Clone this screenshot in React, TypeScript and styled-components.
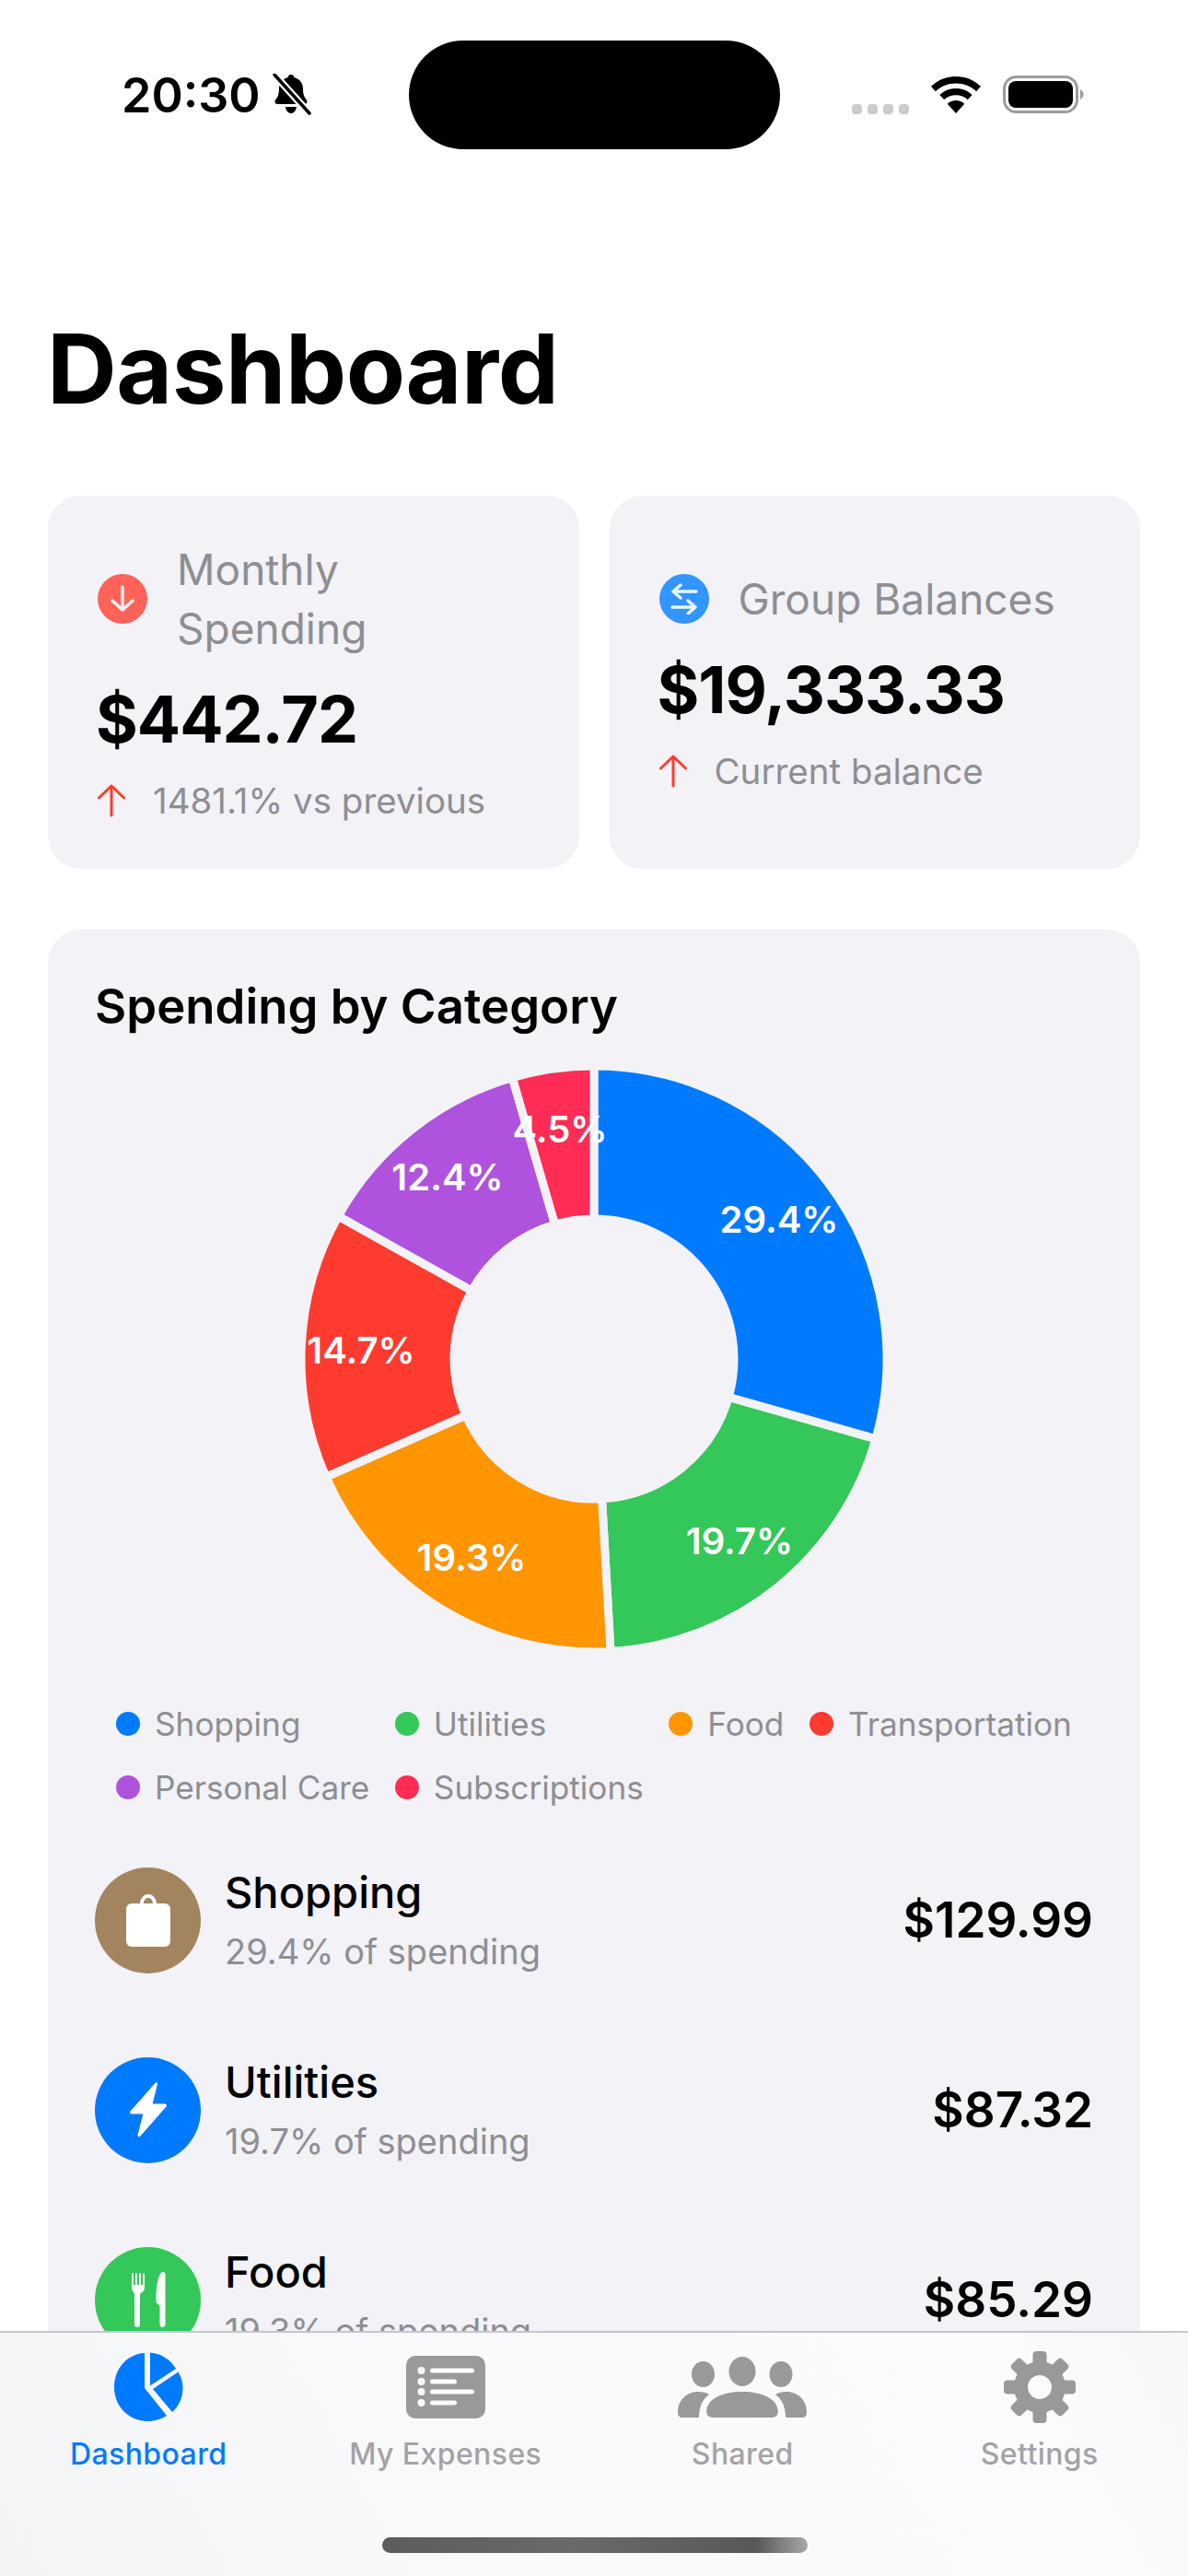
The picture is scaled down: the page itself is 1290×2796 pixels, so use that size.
import React from "react";
import styled, { createGlobalStyle } from "styled-components";

const FONT = `Inter, "Liberation Sans", sans-serif`;

const Global = createGlobalStyle`
  html, body { margin: 0; padding: 0; background: #fff; }
  body { font-family: ${FONT}; -webkit-font-smoothing: antialiased; }
`;

const Screen = styled.div`
  position: relative;
  width: 1290px;
  height: 2796px;
  overflow: hidden;
  background: #fff;
`;

const StatusBar = styled.header`
  display: grid;
  grid-template-columns: 1fr 403px 1fr;
  align-items: center;
  height: 118px;
  padding-top: 44px;
`;
const StatusLeft = styled.div`
  display: flex;
  align-items: center;
  justify-content: flex-start;
  padding-left: 132px;
  gap: 12px;
`;
const Time = styled.span`
  font-size: 52px;
  font-weight: 600;
  color: #000;
`;
const Island = styled.div`
  height: 118px;
  border-radius: 59px;
  background: #000;
`;
const StatusRight = styled.div`
  display: flex;
  align-items: center;
  padding-left: 78px;
  gap: 24px;
`;
const SignalDots = styled.div`
  display: flex;
  gap: 6px;
  margin-top: 30px;
`;
const SignalDot = styled.i`
  width: 11px;
  height: 11px;
  border-radius: 4px;
  background: #cbcbcb;
`;

const Content = styled.main`
  padding: 0 52px;
`;
const Title = styled.h1`
  margin: 0;
  padding-top: 178px;
  margin-left: -1px;
  font-size: 105px;
  line-height: 120px;
  font-weight: 700;
  letter-spacing: -0.5px;
  color: #000;
`;
const Cards = styled.section`
  display: grid;
  grid-template-columns: 1fr 1fr;
  gap: 33px;
  margin-top: 78px;
`;
const Card = styled.div`
  display: flex;
  flex-direction: column;
  justify-content: center;
  height: 405px;
  box-sizing: border-box;
  padding: 0 54px 4px;
  border-radius: 36px;
  background: #f2f2f7;
`;
const CardHead = styled.div`
  display: flex;
  align-items: center;
  gap: 32px;
`;
const CardIcon = styled.div<{ $bg: string }>`
  flex: none;
  display: flex;
  align-items: center;
  justify-content: center;
  width: 54px;
  height: 54px;
  border-radius: 50%;
  background: ${(p) => p.$bg};
`;
const CardTitle = styled.div`
  font-size: 46px;
  line-height: 64px;
  font-weight: 400;
  color: #8e8e93;
`;
const CardValue = styled.div`
  margin-top: 25px;
  margin-left: -2px;
  font-size: 70px;
  line-height: 84px;
  font-weight: 700;
  letter-spacing: -1px;
  color: #000;
`;
const CardSub = styled.div`
  display: flex;
  align-items: center;
  gap: 30px;
  margin-top: 23px;
  font-size: 38.5px;
  line-height: 46px;
  color: #8e8e93;
`;

const Panel = styled.section`
  margin-top: 66px;
  height: 1700px;
  box-sizing: border-box;
  padding: 50px 51px 0;
  border-radius: 36px;
  background: #f2f2f7;
`;
const PanelTitle = styled.h2`
  margin: 0;
  font-size: 52.7px;
  line-height: 66px;
  font-weight: 600;
  color: #000;
`;
const ChartWrap = styled.div`
  display: flex;
  justify-content: center;
  margin-top: 30px;
`;
const Legend = styled.div`
  display: grid;
  grid-template-columns: repeat(4, auto);
  justify-content: start;
  column-gap: 27.5px;
  row-gap: 23px;
  margin: 53px 0 0 23px;
`;
const LegendItem = styled.div`
  display: flex;
  align-items: center;
  gap: 16px;
  font-size: 35.2px;
  line-height: 46px;
  color: #8e8e93;
  white-space: nowrap;
`;
const LegendDot = styled.i<{ $c: string }>`
  width: 26px;
  height: 26px;
  border-radius: 50%;
  background: ${(p) => p.$c};
`;
const List = styled.div`
  display: flex;
  flex-direction: column;
  gap: 88px;
  margin-top: 62px;
`;
const Row = styled.div`
  display: flex;
  align-items: center;
  gap: 26px;
`;
const RowIcon = styled.div<{ $bg: string }>`
  flex: none;
  display: flex;
  align-items: center;
  justify-content: center;
  width: 115px;
  height: 115px;
  border-radius: 50%;
  background: ${(p) => p.$bg};
`;
const RowBody = styled.div`
  flex: 1;
`;
const RowName = styled.div`
  font-size: 47px;
  line-height: 58px;
  font-weight: 500;
  color: #000;
`;
const RowSub = styled.div`
  font-size: 38px;
  line-height: 50px;
  margin-top: 10px;
  color: #8e8e93;
`;
const RowAmount = styled.div`
  font-size: 53px;
  font-weight: 600;
  color: #000;
`;

const TabBar = styled.nav`
  position: absolute;
  left: 0;
  right: 0;
  bottom: 0;
  height: 266px;
  box-sizing: border-box;
  display: grid;
  grid-template-columns: repeat(4, 1fr);
  border-top: 2px solid #c6c6ca;
  background: linear-gradient(60deg, #f3f4f5 0%, #f9f9fb 35%, #fbfbfd 85%, #f6f7f7 100%);
`;
const Tab = styled.div<{ $active?: boolean }>`
  display: flex;
  flex-direction: column;
  align-items: center;
  padding-top: 20px;
  font-size: 32px;
  font-weight: 500;
  letter-spacing: 0.4px;
  color: ${(p) => (p.$active ? "#007aff" : "#a3a3a6")};
`;
const TabIconBox = styled.div`
  display: flex;
  align-items: center;
  justify-content: center;
  height: 78px;
`;
const TabLabel = styled.span`
  margin-top: 14px;
  line-height: 40px;
`;
const HomeIndicator = styled.div`
  position: absolute;
  left: 415px;
  bottom: 25px;
  width: 462px;
  height: 17px;
  border-radius: 9px;
  background: linear-gradient(90deg, #5c5c5c 0%, #6a6a6a 45%, #585858 88%, #a8a8a8 100%);
`;

const polar = (r: number, pct: number) => {
  const a = (pct / 100) * Math.PI * 2;
  return [r * Math.sin(a), -r * Math.cos(a)];
};
const SLICES = [
  { v: 29.4, c: "#007aff" },
  { v: 19.7, c: "#34c759" },
  { v: 19.3, c: "#ff9500" },
  { v: 14.7, c: "#ff3b30" },
  { v: 12.4, c: "#af52de" },
  { v: 4.5, c: "#ff2d55" },
];
const LABELS = [
  { t: "29.4%", x: 201, y: -152 },
  { t: "19.7%", x: 158, y: 197 },
  { t: "19.3%", x: -133, y: 215 },
  { t: "14.7%", x: -253, y: -10 },
  { t: "12.4%", x: -159, y: -198 },
  { t: "4.5%", x: -37, y: -250 },
];

const slicePath = (from: number, to: number, R: number, r: number) => {
  const [x0, y0] = polar(R, from);
  const [x1, y1] = polar(R, to);
  const [x2, y2] = polar(r, to);
  const [x3, y3] = polar(r, from);
  const large = to - from > 50 ? 1 : 0;
  return `M${x0} ${y0}A${R} ${R} 0 ${large} 1 ${x1} ${y1}L${x2} ${y2}A${r} ${r} 0 ${large} 0 ${x3} ${y3}Z`;
};

const PieLabel = styled.text`
  font-family: ${FONT};
  font-size: 40px;
  font-weight: 600;
  fill: #fff;
  text-anchor: middle;
  dominant-baseline: central;
`;

const Donut = () => {
  let acc = 0;
  return (
    <svg width="640" height="640" viewBox="-320 -320 640 640">
      {SLICES.map((s) => {
        const d = slicePath(acc, acc + s.v, 318, 152);
        acc += s.v;
        return <path key={s.c} d={d} fill={s.c} stroke="#f2f2f7" strokeWidth="9" />;
      })}
      {LABELS.map((l) => (
        <PieLabel key={l.t} x={l.x} y={l.y}>
          {l.t}
        </PieLabel>
      ))}
    </svg>
  );
};

const BellSlash = () => (
  <svg width="43" height="46" viewBox="0 0 43 46">
    <path d="M21 1c2 0 3.200 1.300 3.400 3 6 1.400 9.600 6.200 9.600 12.500 0 6 1.400 9 3.600 11.500 1.700 2 1 5-2 5H6.400c-3 0-3.700-3-2-5C6.600 25.500 8 22.500 8 16.500 8 10.200 11.600 5.400 17.600 4 17.800 2.300 19 1 21 1zM15 36h12c-.4 4-3 7-6 7s-5.600-3-6-7z" fill="#000" />
    <path d="M3 1l38 42" stroke="#fff" strokeWidth="8" />
    <path d="M3 1l38 42" stroke="#000" strokeWidth="3.500" strokeLinecap="round" />
  </svg>
);

const Wifi = () => (
  <svg width="54" height="40" viewBox="0 0 54 40">
    <path d="M27 0c10.500 0 20 4 27 10.800l-4.800 5.400C43.500 10.800 35.600 7.500 27 7.500S10.500 10.800 4.800 16.200L0 10.800C7 4 16.500 0 27 0z" fill="#000" />
    <path d="M27 13c6.800 0 13 2.600 17.600 7l-4.800 5.300C36.400 22.100 31.900 20.300 27 20.300s-9.400 1.800-12.800 5L9.400 20C14 15.600 20.200 13 27 13z" fill="#000" />
    <path d="M27 26c3.500 0 6.800 1.300 9.200 3.700L27 40l-9.200-10.300C20.200 27.300 23.500 26 27 26z" fill="#000" />
  </svg>
);

const Battery = () => (
  <svg width="88" height="42" viewBox="0 0 88 42">
    <rect x="1.500" y="1.500" width="79" height="38" rx="13" fill="none" stroke="#9c9c9c" strokeWidth="3" />
    <rect x="6" y="6" width="70" height="29" rx="8" fill="#000" />
    <path d="M84 15c2 1 3.500 3 3.500 5.500S86 25 84 26z" fill="#9c9c9c" />
  </svg>
);

const ArrowDown = () => (
  <svg width="28" height="32" viewBox="0 0 28 32" fill="none" stroke="#fff" strokeWidth="3.500" strokeLinecap="round" strokeLinejoin="round" opacity="0.9">
    <path d="M14 3v25M3 18l11 10 11-10" />
  </svg>
);
const Swap = () => (
  <svg width="30" height="34" viewBox="0 0 30 34" fill="none" stroke="#fff" strokeWidth="3.500" strokeLinecap="round" strokeLinejoin="round" opacity="0.9">
    <path d="M28 9H3M11 2L3 9l8 7M2 26h25M19 19l8 7-8 7" />
  </svg>
);
const ArrowUp = () => (
  <svg width="30" height="36" viewBox="0 0 30 36" fill="none" stroke="#ff3b30" strokeWidth="3" strokeLinecap="round" strokeLinejoin="round">
    <path d="M15 34V2M1.500 15L15 2l13.500 13" />
  </svg>
);

const Bag = () => (
  <svg width="48" height="60" viewBox="0 0 48 60">
    <path d="M15 15v-3c0-5 4-10 9-10s9 5 9 10v3h-4v-3c0-3-2-6-5-6s-5 3-5 6v3z" fill="#fff" />
    <rect x="0" y="12" width="48" height="47" rx="6" fill="#fff" />
  </svg>
);
const Bolt = () => (
  <svg width="40" height="60" viewBox="0 0 40 60">
    <path d="M28 1c.800-.700 1.700 0 1.500 1L24 24h14c1.500 0 2 1.300 1.200 2.300L11 58.500c-1 1-2.300.300-2-1L15 34H2c-1.500 0-2-1.300-1.200-2.200z" fill="#fff" stroke="#fff" strokeLinejoin="round" />
  </svg>
);
const Cutlery = () => (
  <svg width="38" height="62" viewBox="0 0 38 62" fill="#fff">
    <path d="M1 3c0-1 2-1 2 0v12h2V3c0-1 2-1 2 0v12h2V3c0-1 2-1 2 0v12h2V3c0-1 2-1 2 0v15c0 3-2 5-5 6.500V58c0 2-1.500 3-3 3s-3-1-3-3V24.500C3 23 1 21 1 18z" />
    <path d="M35 1c1.500 0 2.500 1 2.500 2.500V58c0 2-1.500 3-3 3s-3-1-3-3V38l-3-3c-1-1-1-2-1-3.500C27.500 16 30 1 35 1z" />
  </svg>
);

const PieTab = () => (
  <svg width="76" height="76" viewBox="0 0 76 76" fill="#007aff">
    <path d="M34 1C15 2 1 18 1 38c0 21 16 37 37 37 7.500 0 14-2.500 20-6L34 39z" />
    <path d="M40 0.500v36L68 18C62 8 52 1.500 40 .500z" />
    <path d="M70.500 21.500L43 40l21 25c7-6 11.500-15.500 11.500-26 0-6.500-2-12.500-5-17.500z" />
  </svg>
);
const ListTab = () => (
  <svg width="86" height="68" viewBox="0 0 86 68">
    <rect width="86" height="68" rx="10" fill="#999a9c" />
    {[16, 28, 39, 51].map((y, i) => (
      <g key={y} fill="#fbfbfd">
        <circle cx="16.500" cy={y} r="4" />
        <rect x="26" y={y - 2.5} width={i % 2 ? 29 : 48} height="5" rx="2.500" />
      </g>
    ))}
  </svg>
);
const PeopleTab = () => (
  <svg width="140" height="66" viewBox="0 0 140 66" fill="#98999b">
    <ellipse cx="27.500" cy="19" rx="12.500" ry="14" />
    <ellipse cx="112" cy="19" rx="12.500" ry="14" />
    <ellipse cx="70" cy="16" rx="14.500" ry="16" />
    <path d="M0 60C0 48 9 38 22 38c5 0 9 1 12 3-7 5-11 13-11 25H5c-3 0-5-2-5-6z" />
    <path d="M140 60c0-12-9-22-22-22-5 0-9 1-12 3 7 5 11 13 11 25h18c3 0 5-2 5-6z" />
    <path d="M39 66c-6 0-12 0-11-8 1-12 18-20 42-20s41 8 42 20c1 8-5 8-11 8z" transform="matrix(.92 0 0 1 5.600 0)" />
  </svg>
);
const GearTab = () => {
  const teeth = Array.from({ length: 8 }, (_, i) => i * 45);
  return (
    <svg width="78" height="78" viewBox="-39 -39 78 78" fill="#98999b">
      <path fillRule="evenodd" d="M0-28a28 28 0 1 0 .01 0zM0-13a13 13 0 1 1-.01 0z" />
      {teeth.map((a) => (
        <rect key={a} x="-7.500" y="-39" width="15" height="16" rx="4" transform={`rotate(${a})`} />
      ))}
    </svg>
  );
};

const LEGEND = [
  ["Shopping", "#007aff"],
  ["Utilities", "#34c759"],
  ["Food", "#ff9500"],
  ["Transportation", "#ff3b30"],
  ["Personal Care", "#af52de"],
  ["Subscriptions", "#ff2d55"],
];

const ROWS = [
  { name: "Shopping", sub: "29.4% of spending", amt: "$129.99", bg: "#a2845e", icon: <Bag /> },
  { name: "Utilities", sub: "19.7% of spending", amt: "$87.32", bg: "#007aff", icon: <Bolt /> },
  { name: "Food", sub: "19.3% of spending", amt: "$85.29", bg: "#34c759", icon: <Cutlery /> },
];

export default function App() {
  return (
    <Screen>
      <Global />
      <StatusBar>
        <StatusLeft>
          <Time>20:30</Time>
          <BellSlash />
        </StatusLeft>
        <Island />
        <StatusRight>
          <SignalDots>
            <SignalDot />
            <SignalDot />
            <SignalDot />
            <SignalDot />
          </SignalDots>
          <Wifi />
          <Battery />
        </StatusRight>
      </StatusBar>
      <Content>
        <Title>Dashboard</Title>
        <Cards>
          <Card>
            <CardHead>
              <CardIcon $bg="#ff6259">
                <ArrowDown />
              </CardIcon>
              <CardTitle>
                Monthly
                <br />
                Spending
              </CardTitle>
            </CardHead>
            <CardValue>$442.72</CardValue>
            <CardSub>
              <ArrowUp />
              1481.1% vs previous
            </CardSub>
          </Card>
          <Card>
            <CardHead>
              <CardIcon $bg="#3395ff">
                <Swap />
              </CardIcon>
              <CardTitle>Group Balances</CardTitle>
            </CardHead>
            <CardValue>$19,333.33</CardValue>
            <CardSub>
              <ArrowUp />
              Current balance
            </CardSub>
          </Card>
        </Cards>
        <Panel>
          <PanelTitle>Spending by Category</PanelTitle>
          <ChartWrap>
            <Donut />
          </ChartWrap>
          <Legend>
            {LEGEND.map(([t, c]) => (
              <LegendItem key={t}>
                <LegendDot $c={c} />
                {t}
              </LegendItem>
            ))}
          </Legend>
          <List>
            {ROWS.map((r) => (
              <Row key={r.name}>
                <RowIcon $bg={r.bg}>{r.icon}</RowIcon>
                <RowBody>
                  <RowName>{r.name}</RowName>
                  <RowSub>{r.sub}</RowSub>
                </RowBody>
                <RowAmount>{r.amt}</RowAmount>
              </Row>
            ))}
          </List>
        </Panel>
      </Content>
      <TabBar>
        <Tab $active>
          <TabIconBox>
            <PieTab />
          </TabIconBox>
          <TabLabel>Dashboard</TabLabel>
        </Tab>
        <Tab>
          <TabIconBox>
            <ListTab />
          </TabIconBox>
          <TabLabel>My Expenses</TabLabel>
        </Tab>
        <Tab>
          <TabIconBox>
            <PeopleTab />
          </TabIconBox>
          <TabLabel>Shared</TabLabel>
        </Tab>
        <Tab>
          <TabIconBox>
            <GearTab />
          </TabIconBox>
          <TabLabel>Settings</TabLabel>
        </Tab>
      </TabBar>
      <HomeIndicator />
    </Screen>
  );
}
